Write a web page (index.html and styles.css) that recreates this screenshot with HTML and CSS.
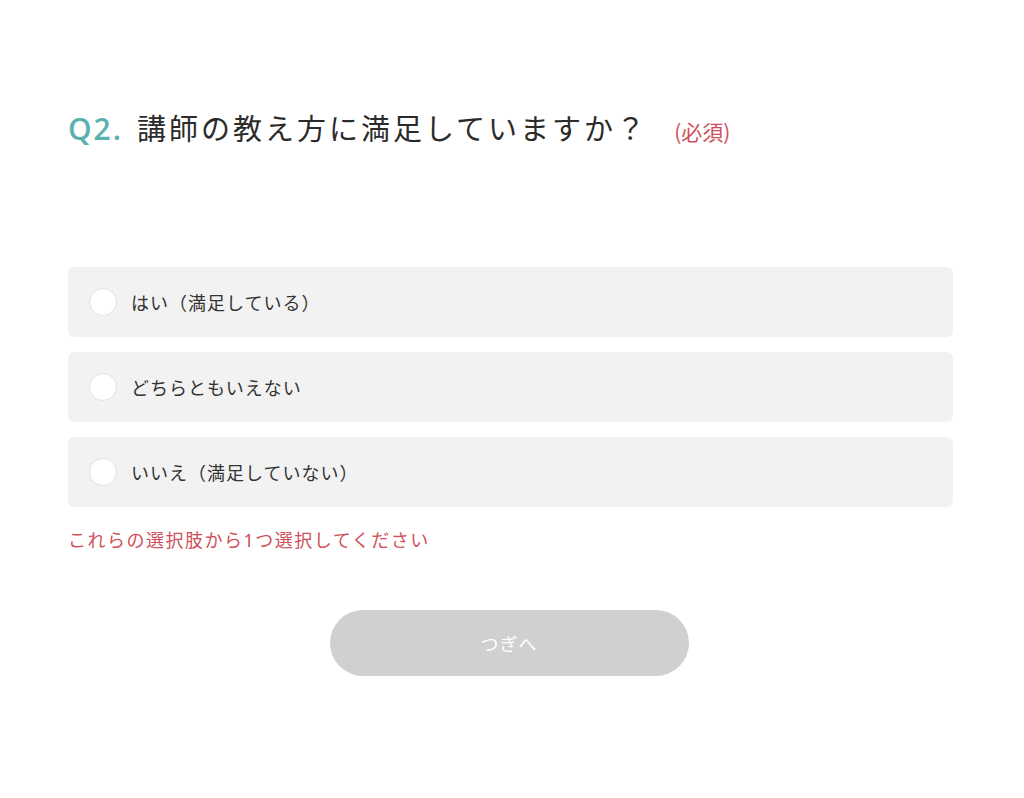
FILE: index.html
```html
<!DOCTYPE html>
<html lang="ja">
<head>
<meta charset="utf-8">
<link rel="stylesheet" href="styles.css">
</head>
<body>
<main class="page">
  <h1 class="question">
    <span class="qnum">Q2.</span>
    <span class="qtext">講師の教え方に満足していますか？</span>
    <span class="required">(必須)</span>
  </h1>
  <div class="options">
    <label class="option"><span class="radio"></span><span class="label">はい（満足している）</span></label>
    <label class="option"><span class="radio"></span><span class="label">どちらともいえない</span></label>
    <label class="option"><span class="radio"></span><span class="label">いいえ（満足していない）</span></label>
  </div>
  <p class="error">これらの選択肢から1つ選択してください</p>
  <div class="actions">
    <button class="next" type="button">つぎへ</button>
  </div>
</main>
</body>
</html>
```
FILE: styles.css
```css
html, body {
  margin: 0;
  padding: 0;
  background: #ffffff;
}
body {
  font-family: "Noto Sans", "Noto Sans CJK JP", sans-serif;
  color: #333333;
}
.page {
  width: 885px;
  padding: 105px 0 0 68px;
}
.question {
  margin: 0;
  display: flex;
  align-items: baseline;
  font-weight: 400;
  line-height: 44px;
}
.qnum {
  font-family: "Open Sans", "Noto Sans", sans-serif;
  font-weight: 600;
  color: #5ab2ae;
  font-size: 30px;
  letter-spacing: 2px;
  margin-right: 14px;
}
.qtext {
  font-family: "Noto Sans CJK JP", sans-serif;
  font-size: 29px;
  letter-spacing: 3px;
  color: #2b2b2b;
}
.required {
  font-family: "Noto Sans CJK JP", sans-serif;
  font-size: 21px;
  color: #d0505a;
  margin-left: 26px;
}
.options {
  margin-top: 114px;
  display: flex;
  flex-direction: column;
  gap: 15px;
}
.option {
  display: flex;
  align-items: center;
  height: 70px;
  background: #f2f2f2;
  border-radius: 6px;
  padding-left: 21px;
  box-sizing: border-box;
}
.radio {
  width: 28px;
  height: 28px;
  border-radius: 50%;
  background: #ffffff;
  border: 1px solid #e2e2e2;
  box-sizing: border-box;
  margin-right: 14px;
}
.label {
  font-size: 18px;
  color: #333333;
  letter-spacing: 1px;
}
.error {
  margin: 19px 0 0;
  font-size: 18px;
  line-height: 28px;
  letter-spacing: 1.5px;
  color: #d0505a;
}
.actions {
  margin-top: 56px;
  display: flex;
  justify-content: center;
}
.next {
  width: 359px;
  height: 66px;
  border: none;
  border-radius: 33px;
  background: #d0d0d0;
  color: #ffffff;
  font-family: "Noto Sans CJK JP", "Noto Sans", sans-serif;
  font-size: 18px;
  letter-spacing: 1px;
  margin-left: -3px;
}
```
